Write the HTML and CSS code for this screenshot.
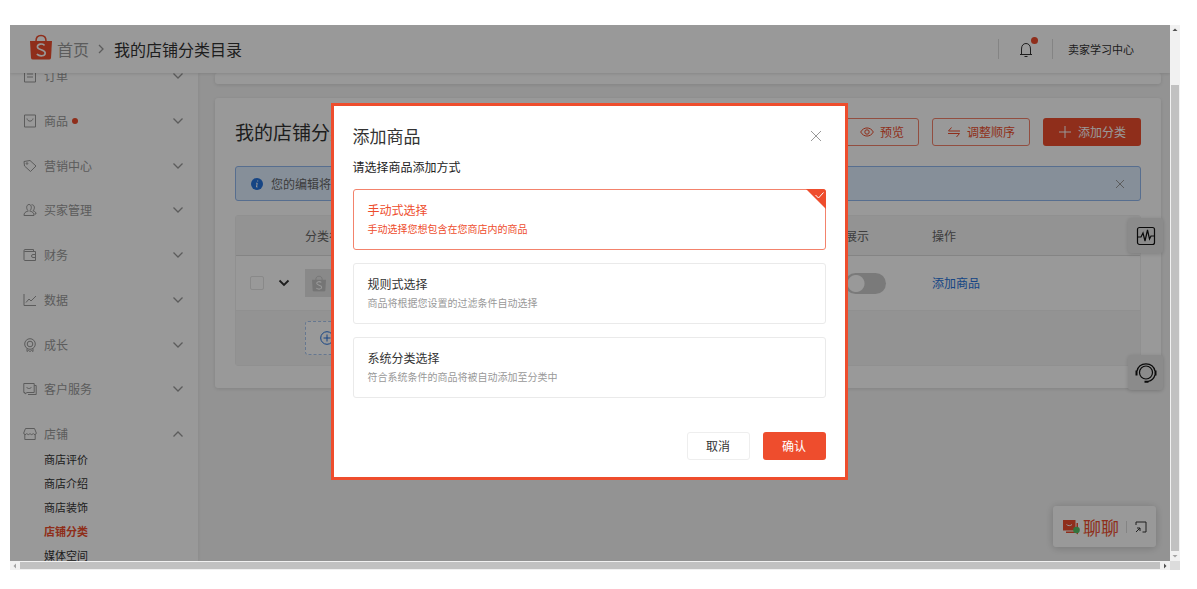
FILE: index.html
```html
<!DOCTYPE html>
<html lang="zh-CN">
<head>
<meta charset="utf-8">
<title>我的店铺分类目录</title>
<link rel="stylesheet" href="styles.css">
</head>
<body>
<svg class="defs" aria-hidden="true">
  <symbol id="down" viewBox="0 0 12 8"><path d="M1.500 1.500 6 6l4.500-4.500"/></symbol>
  <symbol id="bag" viewBox="0 0 22 26"><path d="M6 9V7c0-3.500 2-5.500 5-5.500S16 3.500 16 7v2" fill="none" stroke="currentColor" stroke-width="1.500"/><path d="M0 7h22l-1 17q-.2 1.500-2 1.500H3q-1.800 0-2-1.500z" fill="currentColor" stroke="none"/><path class="bag-s" d="M14.600 11.300c-2.500-2-7.200-1.600-7.200 1.500 0 3.700 7.800 2.200 7.800 6.200 0 3.500-5.500 3.600-8.400 1.200"/></symbol>
</svg>
<div class="frame">
  <div class="viewport">
    <header class="topbar">
      <svg class="logo" viewBox="0 0 22 26"><use href="#bag"/></svg>
      <a class="home" href="#">首页</a>
      <svg class="crumb" viewBox="0 0 8 12"><path d="m2 2 4 4-4 4"/></svg>
      <span class="here">我的店铺分类目录</span>
      <div class="tools">
        <button class="bell" aria-label="通知">
          <svg viewBox="0 0 14 16"><path d="M1 12.500h12M2.500 12.500V7C2.500 3.500 4.300 1.500 7 1.500s4.500 2 4.500 5.500v5.500M5.500 14.500h3"/></svg>
          <span class="bell-dot"></span>
        </button>
        <a class="learn" href="#">卖家学习中心</a>
      </div>
    </header>
    <div class="body">
      <nav class="sidebar">
        <ul class="groups">
          <li><button><svg class="ico" viewBox="0 0 14 14"><path d="M1.500 1h11v12h-11zM4 5h6M4 8h6"/></svg>订单<svg class="chev"><use href="#down"/></svg></button></li>
          <li><button><svg class="ico" viewBox="0 0 14 14"><path d="M1.500 1h11v12h-11zM4 4.500c.5 3.500 5.500 3.500 6 0"/></svg>商品<span class="dot"></span><svg class="chev"><use href="#down"/></svg></button></li>
          <li><button><svg class="ico" viewBox="0 0 14 14"><path d="M1 2.500 1.500 7l6 5.500L13 7 7 1.500z"/><circle cx="4" cy="4.500" r=".8"/></svg>营销中心<svg class="chev"><use href="#down"/></svg></button></li>
          <li><button><svg class="ico" viewBox="0 0 14 14"><path d="M5.500 8C3 6.500 3 1.500 6 1.500S9 6.500 6.500 8M5 8C2 9 1 10 1 12.500h10c0-2.500-1-3.500-4-4.500M8.500 1.800c3.500-.5 3.500 4.500 1.500 6 2 .5 3 1.500 3 3.200h-1.500"/></svg>买家管理<svg class="chev"><use href="#down"/></svg></button></li>
          <li><button><svg class="ico" viewBox="0 0 14 14"><path d="M1 3v8.500q0 1 1 1h10.500v-9H2Q1 3.500 1 2.500t1-1h8.500v2M12.500 6.500H10q-1.500 0-1.500 1.500T10 9.500h2.500"/></svg>财务<svg class="chev"><use href="#down"/></svg></button></li>
          <li><button><svg class="ico" viewBox="0 0 14 14"><path d="M1 1v11.500h12M3 9.500l3-3.500 2 2 5-5"/></svg>数据<svg class="chev"><use href="#down"/></svg></button></li>
          <li><button><svg class="ico" viewBox="0 0 14 14"><circle cx="7" cy="6" r="5.300"/><circle cx="7" cy="6" r="2.800"/><path d="M4 10.500v3l1.500-1L7 13.500l1.500-1 1.500 1v-3"/></svg>成长<svg class="chev"><use href="#down"/></svg></button></li>
          <li><button><svg class="ico" viewBox="0 0 14 14"><path d="M.8 1.500h10.400v9H4l-2 1.500v-1.500H.8zM3.500 5c1 2 4 2 5 0M11.200 3.500h2v9H5"/></svg>客户服务<svg class="chev"><use href="#down"/></svg></button></li>
          <li><button><svg class="ico" viewBox="0 0 14 14"><path d="M2.500 1.500h9L13.300 6c0 2-2.500 2-3.100.5-.6 1.500-2.600 1.500-3.200 0-.6 1.500-2.600 1.500-3.200 0C3.200 8 .7 8 .7 6zM1.800 7.500v5h10.400v-5"/></svg>店铺<svg class="chev up"><use href="#down"/></svg></button></li>
        </ul>
        <ul class="sub">
          <li><a href="#">商店评价</a></li>
          <li><a href="#">商店介绍</a></li>
          <li><a href="#">商店装饰</a></li>
          <li><a class="active" href="#">店铺分类</a></li>
          <li><a href="#">媒体空间</a></li>
        </ul>
      </nav>
      <main class="main">
        <section class="card card-prev"></section>
        <section class="card">
          <div class="card-head">
            <h1>我的店铺分类</h1>
            <div class="actions">
              <button class="btn outline"><svg class="bi" viewBox="0 0 14 12"><path d="M.7 6C3.500.6 10.500.6 13.300 6 10.500 11.400 3.500 11.400.7 6z"/><circle cx="7" cy="6" r="2.200"/></svg>预览</button>
              <button class="btn outline"><svg class="bi" viewBox="0 0 14 12"><path d="M4.500 1.500 1.500 5H13M1 7.500h11.500l-3 3.500"/></svg>调整顺序</button>
              <button class="btn solid"><svg class="bi" viewBox="0 0 14 12"><path d="M7 0v12M1 6h12"/></svg>添加分类</button>
            </div>
          </div>
          <div class="alert">
            <svg class="info" viewBox="0 0 12 12"><circle cx="6" cy="6" r="6"/><path d="M6.700 2.500v1M5.200 5.200h1L5.500 9h1"/></svg>
            <span>您的编辑将</span>
            <button class="alert-x" aria-label="关闭提示"><svg viewBox="0 0 10 10"><path d="m1 1 8 8M9 1 1 9"/></svg></button>
          </div>
          <table class="table">
            <thead>
              <tr><th class="c-tools"></th><th>分类名</th><th class="c-show">展示</th><th class="c-act">操作</th></tr>
            </thead>
            <tbody>
              <tr class="row">
                <td><div class="pick"><input type="checkbox" aria-label="选择分类"><button class="expand" aria-label="收起"><svg class="chev"><use href="#down"/></svg></button></div></td>
                <td><div class="thumb"><svg viewBox="0 0 22 26"><use href="#bag"/></svg></div></td>
                <td><input class="switch" type="checkbox" aria-label="展示"></td>
                <td><a class="link" href="#">添加商品</a></td>
              </tr>
              <tr class="detail">
                <td></td>
                <td colspan="3"><button class="add-sub" aria-label="添加"><svg viewBox="0 0 14 14"><circle cx="7" cy="7" r="6.300"/><path d="M7 3.500v7M3.500 7h7"/></svg></button></td>
              </tr>
            </tbody>
          </table>
        </section>
      </main>
    </div>
    <button class="float monitor" aria-label="监控"><svg viewBox="0 0 20 20"><rect x="1.500" y="1.500" width="17" height="17" rx="2"/><path d="M1.500 11H5l2-4 2 8 2.500-11 2 9 1.500-3h3.500"/></svg></button>
    <button class="float service" aria-label="客服"><svg viewBox="0 0 22 20"><circle cx="11" cy="9.500" r="6.500"/><path d="M2 8C3 3.500 6.500.8 11 .8S19 3.500 20 8M20 12c-1 3.500-3 5.500-7 6.500"/><path class="thick" d="M1.500 7.500v5M20.500 7.500v5M9.500 18.700h4"/></svg></button>
    <div class="chat">
      <svg class="chat-logo" viewBox="0 0 18 16"><path d="M1 1h12.500v10.500H1z M4 12.500h10.500V4H16v11.500l-2-1.500H4z" fill="#ee4d2d"/><path d="M4.500 5.500c1.500 1.500 4 1.500 5.500 0" fill="none" stroke="#fff"/><circle cx="14.500" cy="11" r="3.300" fill="#55c267"/></svg>
      <span class="chat-name">聊聊</span>
      <button class="chat-open" aria-label="展开"><svg viewBox="0 0 12 12"><path d="M1 4V1h10v10H7.500M1 11l4-4M2 7h3v3"/></svg></button>
    </div>
    <div class="overlay">
      <form class="dialog" role="dialog" aria-labelledby="dlg-title">
        <div class="dialog-head">
          <h2 id="dlg-title">添加商品</h2>
          <button class="dialog-x" type="button" aria-label="关闭"><svg viewBox="0 0 12 12"><path d="m1 1 10 10M11 1 1 11"/></svg></button>
        </div>
        <p class="hint">请选择商品添加方式</p>
        <div class="options">
          <label class="option"><input type="radio" name="mode" checked><strong>手动式选择</strong><small>手动选择您想包含在您商店内的商品</small><svg class="tick" viewBox="0 0 20 20"><path d="M0 0h17q3 0 3 3v17z" fill="#ee4d2d"/><path d="m9.500 6 3 3 5-5.500" fill="none" stroke="#fff"/></svg></label>
          <label class="option"><input type="radio" name="mode"><strong>规则式选择</strong><small>商品将根据您设置的过滤条件自动选择</small></label>
          <label class="option"><input type="radio" name="mode"><strong>系统分类选择</strong><small>符合系统条件的商品将被自动添加至分类中</small></label>
        </div>
        <div class="dialog-foot">
          <button class="btn plain" type="button">取消</button>
          <button class="btn solid" type="button">确认</button>
        </div>
      </form>
    </div>
  </div>
  <div class="vbar"><svg viewBox="0 0 10 10"><path d="M5 3.500 7.500 6h-5z" fill="#505050"/></svg><span class="vthumb"></span><svg viewBox="0 0 10 10"><path d="M5 6.500 2.500 4h5z" fill="#a3a3a3"/></svg></div>
  <div class="hbar"><svg viewBox="0 0 10 10"><path d="M3.500 5 6 2.500v5z" fill="#a3a3a3"/></svg><span class="hthumb"></span><svg viewBox="0 0 10 10"><path d="M6.500 5 4 2.500v5z" fill="#505050"/></svg></div>
  <div class="corner"></div>
</div>
</body>
</html>
```
FILE: styles.css
```css
* { box-sizing: border-box; }
body {
  margin: 0;
  height: 100vh;
  padding: 25px 17px 19px 10px;
  background: #fff;
  color: #333;
  font: 12px/20px "Noto Sans CJK SC", sans-serif;
}
button { padding: 0; border: 0; background: none; color: inherit; font: inherit; cursor: pointer; }
a { color: inherit; text-decoration: none; }
ul { margin: 0; padding: 0; list-style: none; }
h1, h2, p { margin: 0; font-weight: 400; }
svg { display: block; fill: none; stroke: currentColor; }
.defs { position: absolute; width: 0; height: 0; }
.bag-s { stroke: #fff; stroke-width: 1.6; fill: none; }

.frame { display: grid; grid-template: minmax(0, 1fr) 9px / minmax(0, 1fr) 10px; height: 100%; }
.viewport { position: relative; display: flex; flex-direction: column; overflow: hidden; background: #f6f6f6; }

.topbar {
  position: relative;
  z-index: 1;
  display: flex;
  align-items: center;
  flex: none;
  height: 48px;
  padding: 0 36px 0 20px;
  background: #fff;
  box-shadow: 0 1px 3px rgba(0, 0, 0, .12);
}
.logo { width: 22px; height: 26px; margin: 0 5px 4px 0; color: #ee4d2d; }
.home, .here { font-size: 16px; line-height: 20px; }
.home { color: #999; }
.crumb { width: 8px; height: 12px; margin: 0 9px 0 8px; color: #999; stroke-width: 1.3; }
.tools { display: flex; align-items: center; margin-left: auto; }
.bell { position: relative; display: flex; justify-content: center; width: 54px; height: 20px; border-left: 1px solid #ddd; }
.bell svg { width: 14px; height: 16px; margin-top: 3px; }
.bell-dot { position: absolute; top: -2px; right: 14px; width: 7px; height: 7px; border-radius: 50%; background: #ee4d2d; }
.learn { padding-left: 15px; border-left: 1px solid #ddd; font-size: 11px; }

.body { display: flex; flex: 1; min-height: 0; }
.sidebar { flex: none; width: 188px; overflow: hidden; background: #fff; box-shadow: 1px 0 3px rgba(0, 0, 0, .06); }
.groups { display: flex; flex-direction: column; justify-content: space-between; height: 378px; margin-top: -7px; color: #999; }
.groups button { display: flex; align-items: center; width: 100%; padding: 0 14px 0 13px; }
.ico { width: 14px; height: 14px; margin-right: 7px; }
.chev { width: 12px; height: 8px; stroke-width: 1.3; }
.groups .chev { margin-left: auto; }
.up { transform: rotate(180deg); }
.dot { width: 6px; height: 6px; margin-left: 4px; border-radius: 50%; background: #ee4d2d; }
.sub { margin-top: 3px; padding-left: 34px; font-size: 11px; line-height: 24px; }
.active { color: #ee4d2d; font-weight: 700; }

.main { flex: 1; min-width: 0; padding: 0 9px 0 17px; }
.card { padding: 20px 20px 22px; border-radius: 3px; background: #fff; box-shadow: 0 1px 4px rgba(0, 0, 0, .12); }
.card-prev { height: 11px; margin-bottom: 14px; padding: 0; }
.card-head { display: flex; align-items: center; justify-content: space-between; }
.card-head h1 { font-size: 19px; line-height: 28px; }
.actions { display: flex; gap: 13px; }
.btn { display: flex; align-items: center; justify-content: center; height: 28px; padding: 0 14px; border: 1px solid transparent; border-radius: 3px; white-space: nowrap; }
.bi { width: 14px; height: 12px; margin-right: 6px; }
.outline { border-color: #f3836c; color: #ee4d2d; }
.solid { background: #ee4d2d; color: #fff; }
.plain { border-color: #eee; }

.alert { display: flex; align-items: center; height: 35px; margin-top: 20px; padding: 0 15px; border: 1px solid #91b7ef; border-radius: 3px; background: #dfeeff; color: #666; }
.info { width: 12px; height: 12px; margin-right: 8px; fill: #2673dd; stroke: none; }
.info path { fill: none; stroke: #fff; }
.alert-x { margin-left: auto; color: #999; }
.alert-x svg { width: 10px; height: 10px; }

.table { width: 100%; margin-top: 14px; border-spacing: 0; table-layout: fixed; border: 1px solid #f0f0f0; border-radius: 3px; }
.table th { height: 40px; padding: 0; border-bottom: 1px solid #ddd; background: #f6f6f6; color: #666; font-weight: 400; text-align: left; }
.c-tools { width: 69px; }
.c-show { width: 87px; }
.c-act { width: 208px; }
.row td { height: 54px; padding: 0; }
.detail td { height: 55px; padding: 0; border-top: 1px solid #f0f0f0; background: #f6f6f6; }
.pick { display: flex; align-items: center; padding-left: 14px; }
.pick input { appearance: none; width: 14px; height: 14px; margin: 0 14px 0 0; border: 1px solid #e5e5e5; border-radius: 2px; }
.expand .chev { stroke-width: 1.8; }
.thumb { display: grid; place-items: center; width: 28px; height: 28px; background: #e4e4e4; color: #c4c4c4; }
.thumb svg { width: 14px; height: 17px; }
.switch { display: block; appearance: none; width: 41px; height: 21px; margin: 0; border-radius: 11px; background: radial-gradient(circle at 11px 50%, #fff 8px, #ccc 9px); }
.link { color: #2673dd; }
.add-sub { display: flex; align-items: center; width: 100px; height: 34px; padding-left: 14px; border: 1px dashed #a8c7f1; border-radius: 3px; background: #fff; color: #2673dd; }
.add-sub svg { width: 14px; height: 14px; }

.float { position: absolute; right: 7px; display: grid; place-items: center; width: 35px; height: 35px; border-radius: 3px; background: #e8e8e8; box-shadow: 0 1px 4px rgba(0, 0, 0, .16); color: #111; }
.monitor { top: 193px; }
.service { top: 330px; }
.float svg { width: 20px; height: 20px; stroke-width: 1.2; }
.service svg { width: 22px; }
.thick { stroke-width: 2; }
.chat { position: absolute; right: 14px; bottom: 14px; display: flex; align-items: center; height: 41px; padding: 0 9px; border-radius: 3px; background: #fff; box-shadow: 0 1px 8px rgba(0, 0, 0, .2); }
.chat-logo { width: 18px; height: 16px; margin-right: 3px; stroke: none; }
.chat-name { color: #ee4d2d; font-size: 18px; }
.chat-open { margin-left: 7px; padding-left: 8px; border-left: 1px solid #ddd; }
.chat-open svg { width: 12px; height: 12px; }

.overlay { position: absolute; inset: 0; z-index: 2; display: grid; place-items: center; padding: 0 2px 3px 0; background: rgba(0, 0, 0, .4); }
.dialog { width: 517px; max-width: 100%; padding: 18px 19px 17px; border: 3px solid #ee4d2d; background: #fff; }
.dialog-head { display: flex; align-items: center; justify-content: space-between; }
.dialog-head h2 { font-size: 17px; line-height: 24px; }
.dialog-x { margin-right: 4px; color: #999; }
.dialog-x svg { width: 12px; height: 12px; }
.hint { margin-top: 9px; color: #222; }
.options { display: grid; gap: 13px; margin-top: 12px; }
.option { position: relative; display: flex; flex-direction: column; height: 61px; padding: 10px 14px; border: 1px solid #eaeaea; border-radius: 3px; }
.option input { position: absolute; margin: 0; opacity: 0; }
.option strong { font-weight: 400; line-height: 20px; }
.option small { color: #999; font-size: 10px; line-height: 17px; }
.option:has(:checked), .option:has(:checked) small { color: #ee4d2d; }
.option:has(:checked) { border-color: #f3836c; }
.tick { position: absolute; top: -1px; right: -1px; width: 20px; height: 20px; stroke: none; }
.dialog-foot { display: flex; justify-content: flex-end; gap: 13px; margin-top: 34px; }
.dialog-foot .btn { width: 63px; }

.vbar, .hbar { display: flex; background: #f1f1f1; }
.vbar { flex-direction: column; }
.vbar svg, .hbar svg { flex: none; width: 10px; height: 10px; stroke: none; }
.vthumb { flex: 1; margin: 50px 1px 0; background: #c1c1c1; }
.hthumb { flex: 1; margin: 1px 0; background: #c1c1c1; }
.corner { background: #dcdcdc; }
```
